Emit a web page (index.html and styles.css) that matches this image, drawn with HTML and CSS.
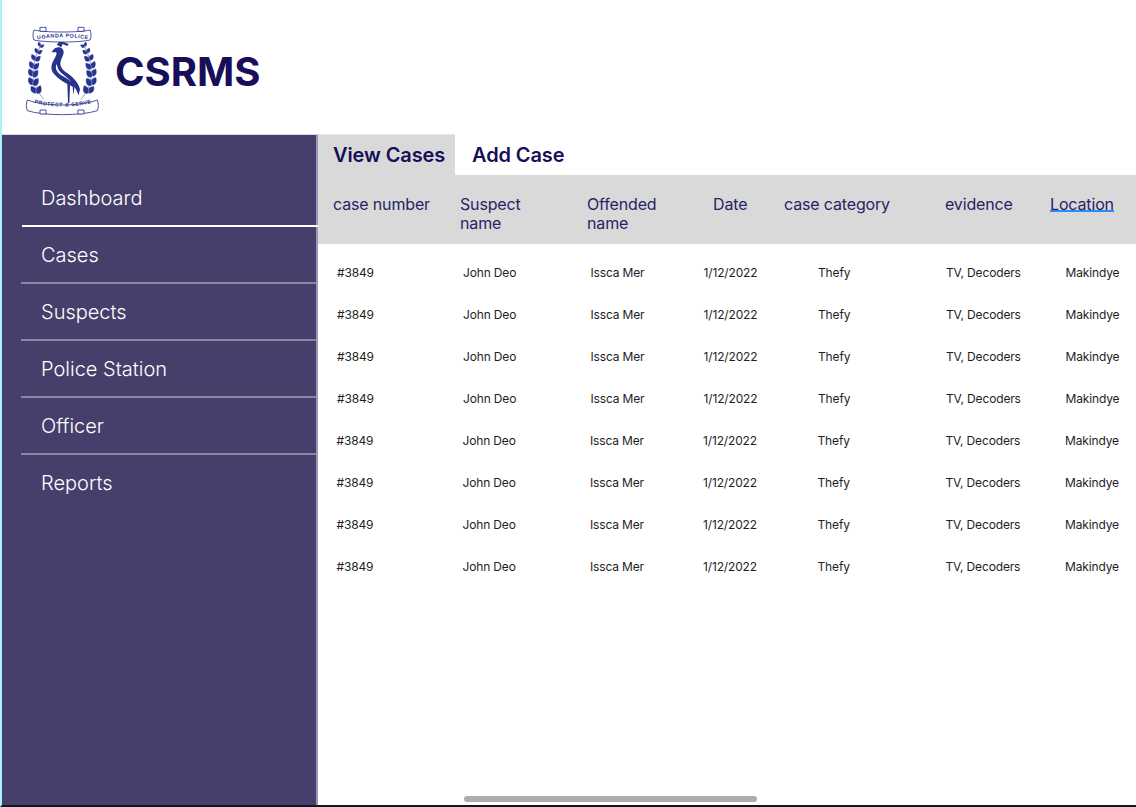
FILE: index.html
```html
<!DOCTYPE html>
<html lang="en">
<head>
    <meta charset="UTF-8">
    <meta name="viewport" content="width=device-width, initial-scale=1.0">
    <title>CSRMS</title>
    <link rel="stylesheet" href="styles.css">
</head>
<body>
    <div class="page">
        <header class="top-bar">
            <svg class="crest" viewBox="0 0 255 300" width="85" height="100">
                <defs>
                    <path id="leaf" d="M0 0C12-3 13-15 3-28C-9-22-12-7 0 0Z"/>
                    <path id="top-curve" d="M54 58C90 50 165 50 203 58"/>
                    <path id="low-curve" d="M36 246C80 264 175 264 222 246"/>
                    <g id="wreath">
                        <path class="stem" d="M64 72C38 120 24 190 72 238"/>
                        <use href="#leaf" transform="translate(60 80) rotate(-20) scale(.55)"/>
                        <use href="#leaf" transform="translate(60 82) rotate(55) scale(.55)"/>
                        <use href="#leaf" transform="translate(53 100) rotate(-30) scale(.65)"/>
                        <use href="#leaf" transform="translate(53 102) rotate(45) scale(.65)"/>
                        <use href="#leaf" transform="translate(46 122) rotate(-35) scale(.8)"/>
                        <use href="#leaf" transform="translate(46 124) rotate(40) scale(.8)"/>
                        <use href="#leaf" transform="translate(40 146) rotate(-30) scale(.9)"/>
                        <use href="#leaf" transform="translate(41 148) rotate(35) scale(.9)"/>
                        <use href="#leaf" transform="translate(38 170) rotate(-30) scale(.95)"/>
                        <use href="#leaf" transform="translate(39 172) rotate(30) scale(.95)"/>
                        <use href="#leaf" transform="translate(40 196) rotate(-35) scale(1)"/>
                        <use href="#leaf" transform="translate(41 198) rotate(25) scale(1)"/>
                        <use href="#leaf" transform="translate(50 220) rotate(-45) scale(1)"/>
                        <use href="#leaf" transform="translate(52 222) rotate(15) scale(1)"/>
                    </g>
                </defs>
                <g class="crest-fill">
                    <use href="#wreath"/>
                    <use href="#wreath" transform="translate(254 0) scale(-1 1)"/>
                    <path class="crane" d="M118 82C106 80 98 90 95 97L108 97C112 100 108 108 100 122C92 136 92 150 102 162C114 176 130 186 142 192L144 250L148 250L150 196L158 200L160 225L164 200L176 226L180 208C176 190 160 172 142 160C128 150 118 140 122 124C126 110 136 98 128 88C126 85 122 83 118 82Z"/>
                    <path class="crane" d="M110 74L120 62L146 72L142 78L128 72L124 82Z"/>
                    <path class="crane" d="M112 262C120 258 150 258 158 262L150 268H120Z"/>
                </g>
                <path class="crane-light" d="M110 132C104 144 110 156 124 166C134 172 146 178 154 186C144 172 124 162 116 150C112 142 112 138 110 132Z"/>
                <path class="ribbon" d="M42 30C75 38 178 38 210 30C214 40 214 52 210 60C178 68 75 68 42 60C38 52 38 40 42 30Z"/>
                <path class="ribbon" d="M60 22H78V34H60ZM174 22H192V34H174Z"/>
                <text class="crest-text"><textPath href="#top-curve" startOffset="50%" text-anchor="middle">UGANDA POLICE</textPath></text>
                <path class="ribbon" d="M22 240C70 260 184 260 232 240C236 252 236 262 232 272C184 288 70 288 22 272C18 262 18 252 22 240Z"/>
                <path class="ribbon" d="M60 270H78V282H60ZM174 270H192V282H174Z"/>
                <text class="crest-text"><textPath href="#low-curve" startOffset="50%" text-anchor="middle">PROTECT &amp; SERVE</textPath></text>
            </svg>
            <h1 class="brand">CSRMS</h1>
        </header>

        <div class="layout">
            <nav class="sidebar">
                <a class="nav-item nav-active">Dashboard</a>
                <a class="nav-item">Cases</a>
                <a class="nav-item">Suspects</a>
                <a class="nav-item">Police Station</a>
                <a class="nav-item">Officer</a>
                <a class="nav-item nav-last">Reports</a>
            </nav>

            <main class="content">
                <div class="tabs">
                    <div class="tab tab-active">View Cases</div>
                    <div class="tab">Add Case</div>
                </div>

                <div class="table-head">
                    <div>case number</div>
                    <div>Suspect<br>name</div>
                    <div>Offended<br>name</div>
                    <div>Date</div>
                    <div>case category</div>
                    <div>evidence</div>
                    <div class="sort-link">Location</div>
                </div>

                <div class="table-body">
                    <div class="row"><span>#3849</span><span>John Deo</span><span>Issca Mer</span><span>1/12/2022</span><span>Thefy</span><span>TV, Decoders</span><span>Makindye</span></div>
                    <div class="row"><span>#3849</span><span>John Deo</span><span>Issca Mer</span><span>1/12/2022</span><span>Thefy</span><span>TV, Decoders</span><span>Makindye</span></div>
                    <div class="row"><span>#3849</span><span>John Deo</span><span>Issca Mer</span><span>1/12/2022</span><span>Thefy</span><span>TV, Decoders</span><span>Makindye</span></div>
                    <div class="row"><span>#3849</span><span>John Deo</span><span>Issca Mer</span><span>1/12/2022</span><span>Thefy</span><span>TV, Decoders</span><span>Makindye</span></div>
                    <div class="row row-shift"><span>#3849</span><span>John Deo</span><span>Issca Mer</span><span>1/12/2022</span><span>Thefy</span><span>TV, Decoders</span><span>Makindye</span></div>
                    <div class="row row-shift"><span>#3849</span><span>John Deo</span><span>Issca Mer</span><span>1/12/2022</span><span>Thefy</span><span>TV, Decoders</span><span>Makindye</span></div>
                    <div class="row row-shift"><span>#3849</span><span>John Deo</span><span>Issca Mer</span><span>1/12/2022</span><span>Thefy</span><span>TV, Decoders</span><span>Makindye</span></div>
                    <div class="row row-shift"><span>#3849</span><span>John Deo</span><span>Issca Mer</span><span>1/12/2022</span><span>Thefy</span><span>TV, Decoders</span><span>Makindye</span></div>
                </div>

                <div class="scroll-thumb"></div>
            </main>
        </div>
    </div>
</body>
</html>
```

FILE: styles.css
```css
html, body {
    margin: 0;
    padding: 0;
    height: 100%;
    overflow: hidden;
}
body {
    font-family: Inter, "Liberation Sans", sans-serif;
    background-color: #fff;
}
.page {
    box-sizing: border-box;
    height: 807px;
    display: flex;
    flex-direction: column;
    border-left: 2px solid #a6f4fb;
    border-bottom: 2px solid #14141c;
}
.top-bar {
    height: 134px;
    display: flex;
    align-items: flex-start;
    padding: 20px 0 0 18px;
    box-sizing: border-box;
}
.crest {
    flex: none;
}
.crest-fill {
    fill: #27348f;
    stroke: #fff;
    stroke-width: 1;
}
.crest-fill .crane {
    stroke: none;
}
.stem {
    fill: none;
    stroke: #27348f;
    stroke-width: 1.5;
}
.crane-light {
    fill: #fff;
}
.ribbon {
    fill: #fff;
    stroke: #27348f;
    stroke-width: 2.5;
}
.crest-text {
    font-family: "Liberation Sans", sans-serif;
    font-size: 16px;
    font-weight: bold;
    letter-spacing: 1.5px;
    fill: #27348f;
}
.brand {
    margin: 28px 0 0 10px;
    font-size: 40px;
    line-height: 48px;
    font-weight: 700;
    color: #170f57;
}
.layout {
    flex: 1;
    display: flex;
    min-height: 0;
}
.sidebar {
    width: 316px;
    flex: none;
    box-sizing: border-box;
    padding-top: 35px;
    background-color: #463e6b;
    border-top: 1px solid #dcdce8;
    border-right: 2px solid #9a96be;
}
.nav-item {
    display: block;
    box-sizing: border-box;
    height: 57px;
    margin-left: 19px;
    padding: 15px 0 0 20px;
    font-size: 20px;
    line-height: 26px;
    font-weight: 300;
    color: #fff;
    border-bottom: 2.5px solid #8b86a4;
}
.nav-active {
    margin-left: 20px;
    margin-right: -2px;
    padding-left: 19px;
    border-bottom-color: #fff;
    position: relative;
}
.nav-last {
    border-bottom: none;
}
.content {
    flex: 1;
    min-width: 0;
    position: relative;
    background: #fff;
}
.tabs {
    display: flex;
    height: 41px;
}
.tab {
    margin-top: 1px;
    padding: 0 0 0 17px;
    font-size: 20px;
    line-height: 40px;
    font-weight: 600;
    letter-spacing: -0.1px;
    color: #170f57;
    white-space: nowrap;
}
.tab-active {
    width: 137px;
    box-sizing: border-box;
    margin-top: 0;
    padding-left: 15px;
    background-color: #d9d9d9;
    border-top: 1px solid #e8e8e8;
}
.table-head {
    height: 69px;
    box-sizing: border-box;
    padding: 20px 0 0 15px;
    display: grid;
    grid-template-columns: 127px 127px 126px 71px 161px 105px auto;
    background-color: #d9d9d9;
    font-size: 16px;
    line-height: 19px;
    letter-spacing: -0.15px;
    color: #2a2266;
}
.sort-link {
    text-decoration: underline;
    text-decoration-color: #2490f5;
    text-decoration-thickness: 2px;
    text-underline-offset: 0;
}
.table-body {
    padding-top: 7px;
}
.row {
    height: 42px;
    padding-left: 19px;
    display: grid;
    grid-template-columns: 126px 127.5px 113px 114.5px 128px 119.5px auto;
    align-items: center;
    font-size: 12px;
    letter-spacing: -0.15px;
    color: #1e1e24;
    white-space: nowrap;
}
.row-shift {
    margin-left: -0.5px;
}
.scroll-thumb {
    position: absolute;
    left: 146px;
    bottom: 3px;
    width: 293px;
    height: 6px;
    border-radius: 3px;
    background-color: #adadad;
}
```
